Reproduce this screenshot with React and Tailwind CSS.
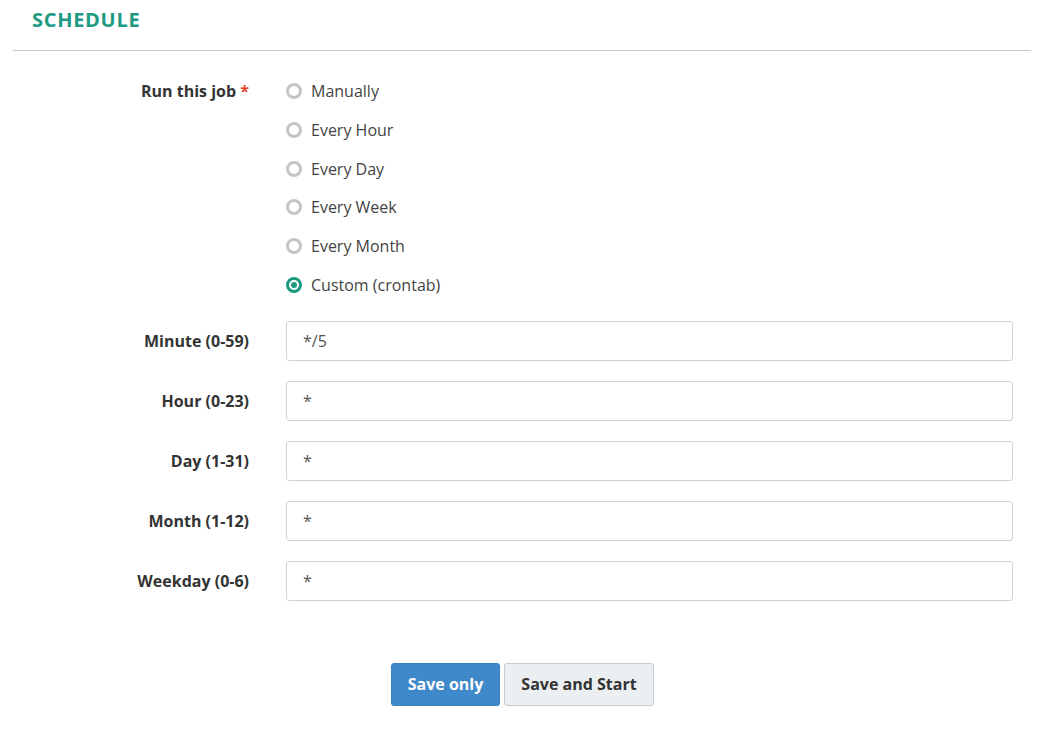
import React from "react";

const options = ["Manually", "Every Hour", "Every Day", "Every Week", "Every Month", "Custom (crontab)"];
const fields = [
  ["Minute (0-59)", "*/5"],
  ["Hour (0-23)", "*"],
  ["Day (1-31)", "*"],
  ["Month (1-12)", "*"],
  ["Weekday (0-6)", "*"],
];

function Radio({ checked }) {
  return checked ? (
    <span className="w-4 h-4 rounded-full border-[3px] border-[#1e9a83] flex items-center justify-center shrink-0">
      <span className="w-[6px] h-[6px] rounded-full bg-[#1e9a83]" />
    </span>
  ) : (
    <span className="w-4 h-4 rounded-full border-[3px] border-[#c3c6c9] bg-white shrink-0" />
  );
}

export default function App() {
  return (
    <div className="w-[1043px] h-[729px] bg-white" style={{ fontFamily: '"Open Sans", sans-serif' }}>
      <div className="pl-[13px] pr-[12px]">
        <div className="pl-[19px] pt-[6px] h-[51px] border-b border-[#c5c9cd]">
          <h2 className="text-[20px] leading-[28px] font-bold text-[#1e9a83] tracking-[0.7px]">SCHEDULE</h2>
        </div>
        <div className="pt-[28px] pr-[18px]">
          <div className="flex">
            <div className="w-[236px] shrink-0 text-right">
              <span className="text-[16px] leading-[24px] font-bold text-[#333]">Run this job</span>
              <span className="text-[16px] leading-[24px] font-bold text-[#e0452f]"> *</span>
            </div>
            <div className="ml-[37px] flex flex-col gap-[14.8px]">
              {options.map((o, i) => (
                <label key={o} className="flex items-center gap-[9px] h-[24px]">
                  <Radio checked={i === options.length - 1} />
                  <span className="text-[16px] text-[#444] leading-[24px]">{o}</span>
                </label>
              ))}
            </div>
          </div>
          <div className="mt-[24px] flex flex-col gap-[20px]">
            {fields.map(([l, v]) => (
              <div key={l} className="flex items-center">
                <div className="w-[236px] shrink-0 text-right text-[16px] font-bold text-[#333]">{l}</div>
                <div className="ml-[37px] flex-1 h-[40px] border border-[#cfd2d4] rounded-[3px] flex items-center px-[16px] text-[16px] text-[#555]">
                  {v}
                </div>
              </div>
            ))}
          </div>
          <div className="mt-[62px] flex justify-center gap-[4px] pl-[19px]">
            <button className="w-[109px] h-[43px] rounded-[3px] bg-[#3f88c9] border border-[#3a7fbf] text-white text-[16px] font-bold">Save only</button>
            <button className="w-[150px] h-[43px] rounded-[3px] bg-[#eceff1] border border-[#c8cbce] text-[#333] text-[16px] font-bold">Save and Start</button>
          </div>
        </div>
      </div>
    </div>
  );
}
